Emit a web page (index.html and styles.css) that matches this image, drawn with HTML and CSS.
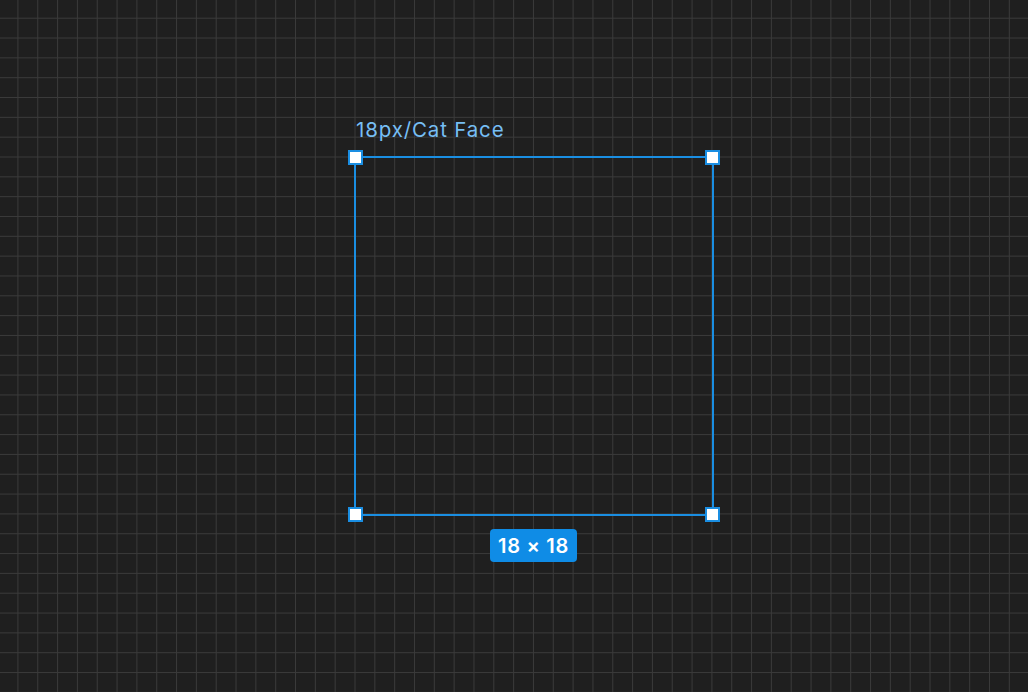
FILE: index.html
```html
<!DOCTYPE html>
<html>
<head>
<meta charset="utf-8">
<link rel="stylesheet" href="styles.css">
</head>
<body>
<div class="canvas">
  <div class="frame-label">18px/Cat Face</div>
  <div class="frame">
    <span class="handle tl"></span>
    <span class="handle tr"></span>
    <span class="handle bl"></span>
    <span class="handle br"></span>
  </div>
  <div class="size-badge">18 × 18</div>
</div>
</body>
</html>
```
FILE: styles.css
```css
html, body {
  margin: 0;
  padding: 0;
  width: 100%;
  height: 100%;
  overflow: hidden;
}
body {
  background-color: #1f1f1f;
  font-family: Inter, "Noto Sans", sans-serif;
}
.canvas {
  position: relative;
  width: 1028px;
  height: 692px;
  background-color: #1f1f1f;
  background-image:
    linear-gradient(to right, #3a3a3a 0, #3a3a3a 1px, transparent 1px),
    linear-gradient(to bottom, #3a3a3a 0, #3a3a3a 1px, transparent 1px);
  background-size: 19.8333px 19.8333px;
  background-position: 354.5px 156.5px;
}
.frame-label {
  position: absolute;
  left: 356px;
  top: 118px;
  font-size: 20.5px;
  line-height: 24px;
  color: #76bef4;
  letter-spacing: 0.85px;
}
.frame {
  position: absolute;
  left: 354px;
  top: 156px;
  width: 360px;
  height: 360px;
  box-sizing: border-box;
  border: 2px solid #1a8ee2;
}
.handle {
  position: absolute;
  width: 15px;
  height: 15px;
  box-sizing: border-box;
  background: #ffffff;
  border: 2px solid #1a8ee2;
}
.handle.tl { left: -8px; top: -8px; }
.handle.tr { right: -8px; top: -8px; }
.handle.bl { left: -8px; bottom: -8px; }
.handle.br { right: -8px; bottom: -8px; }
.size-badge {
  position: absolute;
  left: 490px;
  top: 529px;
  width: 87px;
  height: 33px;
  box-sizing: border-box;
  display: flex;
  align-items: center;
  justify-content: center;
  background: #0f8ce6;
  border-radius: 4px;
  color: #ffffff;
  font-size: 20px;
  font-weight: 600;
  letter-spacing: 0.7px;
}
```
